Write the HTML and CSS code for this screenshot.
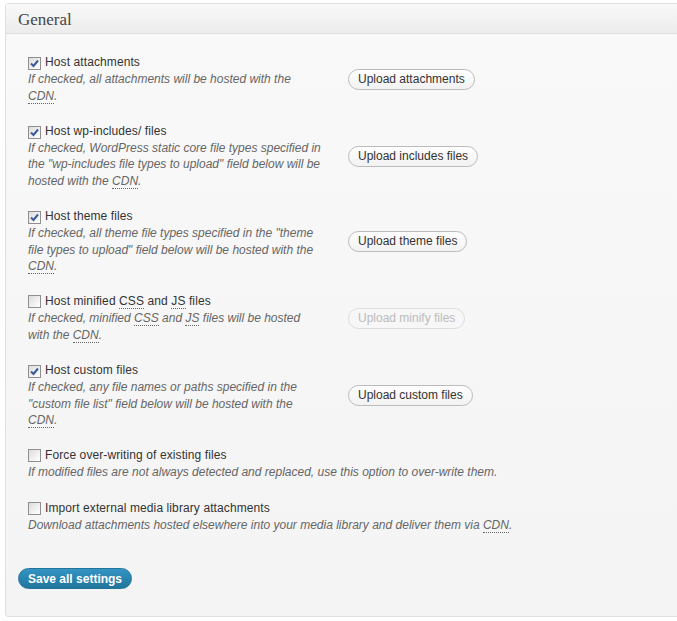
FILE: index.html
```html
<!DOCTYPE html>
<html lang="en">
  <head>
    <meta charset="UTF-8" />
    <meta name="viewport" content="width=device-width, initial-scale=1.0" />
    <title>CDN - General</title>
    <link rel="stylesheet" href="styles.css">
  </head>
  <body>
    <div class="postbox">
      <h3 class="hndle">General</h3>
      <div class="inside">
        <ul class="options">
          <li class="option">
            <div class="text">
              <label class="title"><span class="box checked"><svg viewBox="0 0 11 11" width="11" height="11"><path d="M2 5.5 L4.5 8 L9 2.5" /></svg></span>Host attachments</label>
              <p class="desc">If checked, all attachments will be hosted with the<br><abbr>CDN</abbr>.</p>
            </div>
            <button class="button">Upload attachments</button>
          </li>
          <li class="option">
            <div class="text">
              <label class="title"><span class="box checked"><svg viewBox="0 0 11 11" width="11" height="11"><path d="M2 5.5 L4.5 8 L9 2.5" /></svg></span>Host wp-includes/ files</label>
              <p class="desc">If checked, WordPress static core file types specified in<br>the "wp-includes file types to upload" field below will be<br>hosted with the <abbr>CDN</abbr>.</p>
            </div>
            <button class="button">Upload includes files</button>
          </li>
          <li class="option">
            <div class="text">
              <label class="title"><span class="box checked"><svg viewBox="0 0 11 11" width="11" height="11"><path d="M2 5.5 L4.5 8 L9 2.5" /></svg></span>Host theme files</label>
              <p class="desc">If checked, all theme file types specified in the "theme<br>file types to upload" field below will be hosted with the<br><abbr>CDN</abbr>.</p>
            </div>
            <button class="button">Upload theme files</button>
          </li>
          <li class="option">
            <div class="text">
              <label class="title"><span class="box"></span>Host minified <abbr>CSS</abbr> and <abbr>JS</abbr> files</label>
              <p class="desc">If checked, minified <abbr>CSS</abbr> and <abbr>JS</abbr> files will be hosted<br>with the <abbr>CDN</abbr>.</p>
            </div>
            <button class="button" disabled>Upload minify files</button>
          </li>
          <li class="option">
            <div class="text">
              <label class="title"><span class="box checked"><svg viewBox="0 0 11 11" width="11" height="11"><path d="M2 5.5 L4.5 8 L9 2.5" /></svg></span>Host custom files</label>
              <p class="desc">If checked, any file names or paths specified in the<br>"custom file list" field below will be hosted with the<br><abbr>CDN</abbr>.</p>
            </div>
            <button class="button">Upload custom files</button>
          </li>
          <li class="option">
            <div class="text wide">
              <label class="title"><span class="box"></span>Force over-writing of existing files</label>
              <p class="desc">If modified files are not always detected and replaced, use this option to over-write them.</p>
            </div>
          </li>
          <li class="option">
            <div class="text wide">
              <label class="title"><span class="box"></span>Import external media library attachments</label>
              <p class="desc">Download attachments hosted elsewhere into your media library and deliver them via <abbr>CDN</abbr>.</p>
            </div>
          </li>
        </ul>
        <p class="submit"><button class="button-primary">Save all settings</button></p>
      </div>
    </div>
  </body>
</html>
```

FILE: styles.css
```css
* {
  margin: 0;
  padding: 0;
  box-sizing: border-box;
}
html,
body {
  overflow: hidden;
}
body {
  background: #fff;
  padding: 3px 0 0 5px;
  font-family: "Liberation Sans", Arial, sans-serif;
  font-size: 12px;
  color: #333;
}
.postbox {
  width: 700px;
  border: 1px solid #dfdfdf;
  border-radius: 3px;
  background: linear-gradient(#f9f9f9, #f4f4f4);
}
.hndle {
  height: 30px;
  padding: 3px 12px 0;
  line-height: 26px;
  font-family: "Liberation Serif", Georgia, serif;
  font-size: 17px;
  font-weight: normal;
  color: #464646;
  background: linear-gradient(#f9f9f9, #ececec);
  border-bottom: 1px solid #dfdfdf;
}
.inside {
  padding: 20px 0 27px;
}
.options {
  list-style: none;
  padding-left: 22px;
}
.option {
  display: flex;
  align-items: center;
  margin-bottom: 18.8px;
}
.text {
  width: 320px;
}
.text.wide {
  width: auto;
}
.title {
  display: block;
  line-height: 17px;
  letter-spacing: 0.1px;
}
.box {
  display: inline-flex;
  align-items: center;
  justify-content: center;
  width: 13px;
  height: 13px;
  margin-right: 4px;
  vertical-align: -3px;
  border: 1px solid #8f8f8f;
  background: linear-gradient(135deg, #dcdcdc, #f2f2f2 60%, #fff);
}
.box svg path {
  fill: none;
  stroke: #3a5a9c;
  stroke-width: 2;
}
.desc {
  line-height: 16.5px;
  font-style: italic;
  color: #666;
  white-space: nowrap;
}
abbr {
  text-decoration: none;
  border-bottom: 1px dotted #666;
}
.button {
  height: 21px;
  padding: 0 9px;
  border: 1px solid #bbb;
  border-radius: 11px;
  background: linear-gradient(#fefefe, #f2f2f2);
  font-family: inherit;
  font-size: 12px;
  color: #333;
}
.button:disabled {
  color: #bbb;
  border-color: #ddd;
  background: #f7f7f7;
}
.submit {
  padding: 16px 0 0 12px;
}
.button-primary {
  height: 21px;
  padding: 0 9px;
  border: 1px solid #21759b;
  border-radius: 11px;
  background: linear-gradient(#3394c4, #21759b);
  font-family: inherit;
  font-size: 12px;
  font-weight: bold;
  color: #fff;
}
```
